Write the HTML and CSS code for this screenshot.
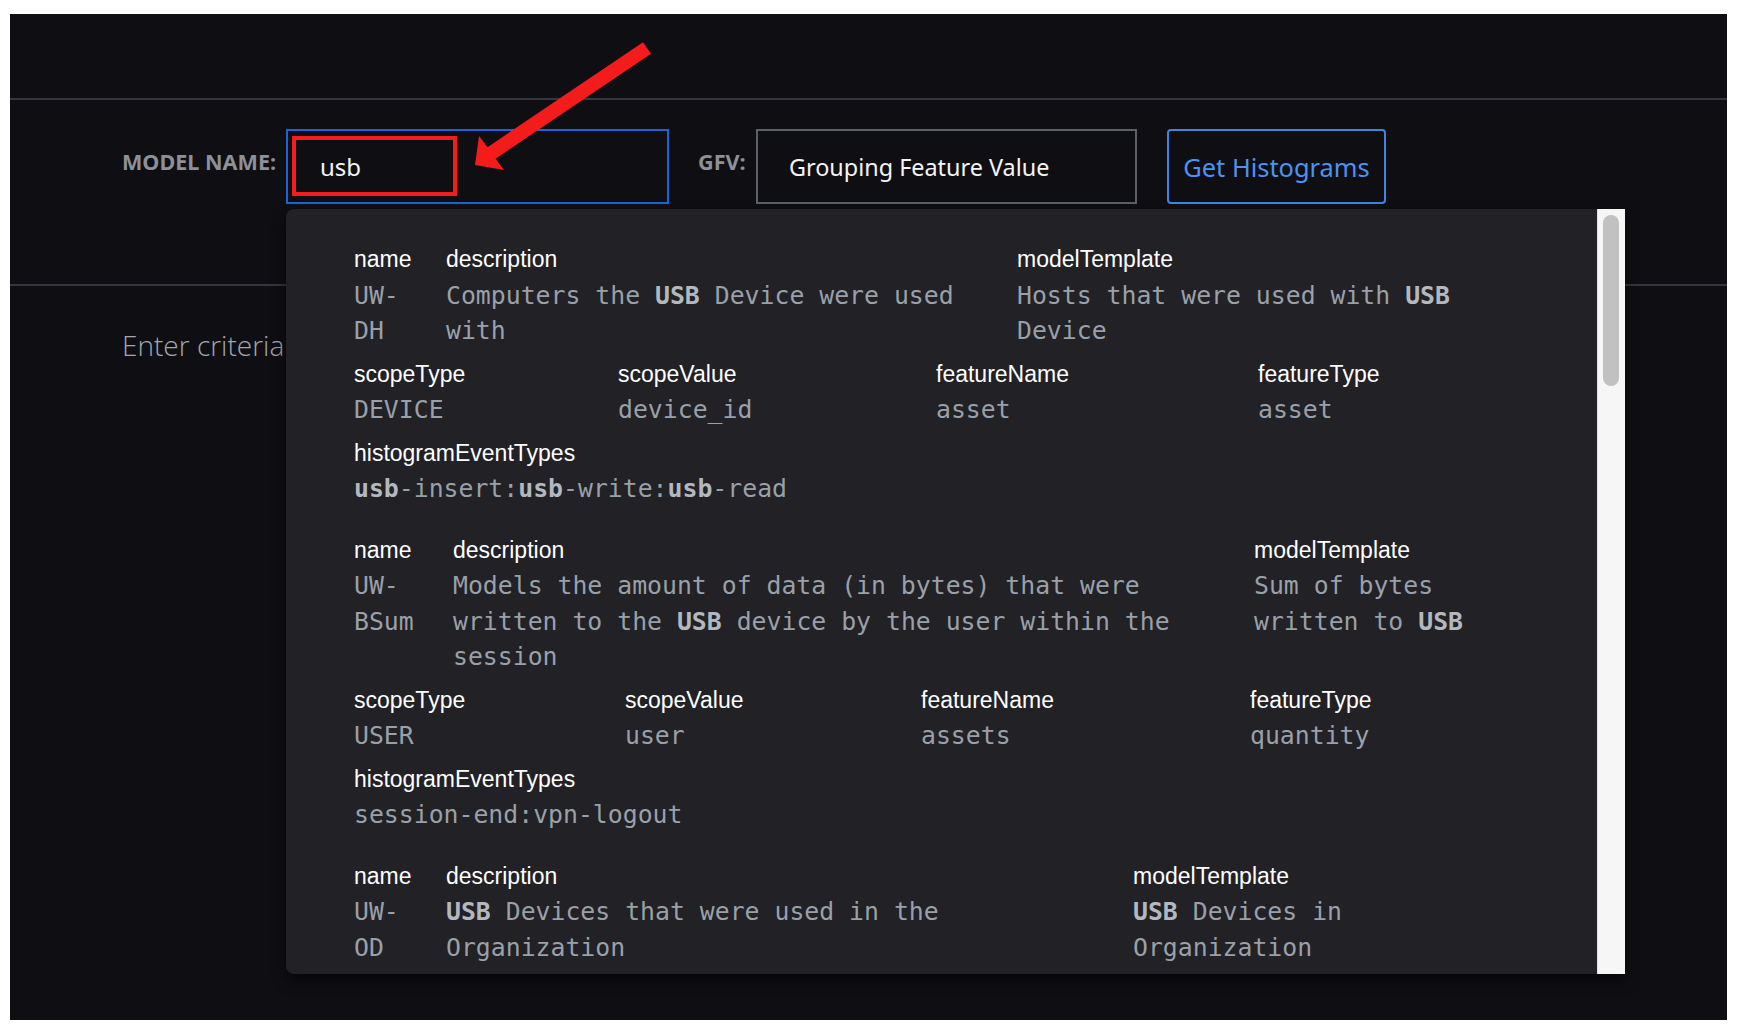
FILE: index.html
```html
<!DOCTYPE html>
<html lang="en">
<head>
<meta charset="utf-8">
<title>Histograms</title>
<link rel="stylesheet" href="styles.css">
</head>
<body>
<div class="screen">
  <header class="topbar"></header>
  <section class="search">
    <div class="form-row">
      <label class="field-label">MODEL NAME:</label>
      <div class="model-field">
        <div class="input input-active">usb</div>
        <div class="highlight"></div>
        <div class="dropdown">
          <div class="list">
            <div class="entry e1">
              <div class="row-top">
                <div class="cell"><div class="lbl">name</div><div class="val">UW-DH</div></div>
                <div class="cell"><div class="lbl">description</div><div class="val">Computers the <b>USB</b> Device were used with</div></div>
                <div class="cell"><div class="lbl">modelTemplate</div><div class="val">Hosts that were used with <b>USB</b> Device</div></div>
              </div>
              <div class="row-scope">
                <div class="cell"><div class="lbl">scopeType</div><div class="val">DEVICE</div></div>
                <div class="cell"><div class="lbl">scopeValue</div><div class="val">device_id</div></div>
                <div class="cell"><div class="lbl">featureName</div><div class="val">asset</div></div>
                <div class="cell"><div class="lbl">featureType</div><div class="val">asset</div></div>
              </div>
              <div class="row-hist">
                <div class="lbl">histogramEventTypes</div>
                <div class="val"><b>usb</b>-insert:<b>usb</b>-write:<b>usb</b>-read</div>
              </div>
            </div>
            <div class="entry e2">
              <div class="row-top">
                <div class="cell"><div class="lbl">name</div><div class="val">UW-BSum</div></div>
                <div class="cell"><div class="lbl">description</div><div class="val">Models the amount of data (in bytes) that were written to the <b>USB</b> device by the user within the session</div></div>
                <div class="cell"><div class="lbl">modelTemplate</div><div class="val">Sum of bytes written to <b>USB</b></div></div>
              </div>
              <div class="row-scope">
                <div class="cell"><div class="lbl">scopeType</div><div class="val">USER</div></div>
                <div class="cell"><div class="lbl">scopeValue</div><div class="val">user</div></div>
                <div class="cell"><div class="lbl">featureName</div><div class="val">assets</div></div>
                <div class="cell"><div class="lbl">featureType</div><div class="val">quantity</div></div>
              </div>
              <div class="row-hist">
                <div class="lbl">histogramEventTypes</div>
                <div class="val">session-end:vpn-logout</div>
              </div>
            </div>
            <div class="entry e3">
              <div class="row-top">
                <div class="cell"><div class="lbl">name</div><div class="val">UW-OD</div></div>
                <div class="cell"><div class="lbl">description</div><div class="val"><b>USB</b> Devices that were used in the Organization</div></div>
                <div class="cell"><div class="lbl">modelTemplate</div><div class="val"><b>USB</b> Devices in Organization</div></div>
              </div>
            </div>
          </div>
          <div class="track"><div class="thumb"></div></div>
        </div>
      </div>
      <label class="field-label gfv">GFV:</label>
      <div class="input input-gfv">Grouping Feature Value</div>
      <button class="btn" type="button">Get Histograms</button>
    </div>
  </section>
  <main class="content">
    <p class="hint">Enter criteria above to view histograms</p>
  </main>
  <svg class="arrow" viewBox="0 0 210 150" width="210" height="150" aria-hidden="true">
    <polygon points="15,135 19,106 27.5,117.2 183,12.2 191,23.8 35.5,128.8 44,140" fill="#f41b1b"/>
  </svg>
</div>
</body>
</html>
```

FILE: styles.css
```css
html, body {
  margin: 0;
  padding: 0;
  background: #ffffff;
}

.screen {
  position: relative;
  margin: 14px 17px 0 10px;
  height: 1006px;
  background: #0f0f13;
  display: flex;
  flex-direction: column;
  overflow: hidden;
}

.topbar {
  flex: none;
  height: 84px;
  border-bottom: 2px solid #35373c;
}

.search {
  flex: none;
  position: relative;
  z-index: 2;
  height: 184px;
  border-bottom: 2px solid #35373c;
}

.form-row {
  display: flex;
  align-items: center;
  padding: 29px 0 0 112px;
}

.field-label {
  flex: none;
  box-sizing: border-box;
  width: 164px;
  padding-bottom: 10px;
  font-family: "Noto Sans", "Open Sans", sans-serif;
  font-weight: 700;
  font-size: 21.6px;
  color: #8c9097;
  white-space: nowrap;
}

.field-label.gfv {
  width: 58px;
  margin-left: 29px;
}

.model-field {
  position: relative;
  flex: none;
}

.input {
  box-sizing: border-box;
  height: 75px;
  display: flex;
  align-items: center;
  padding-left: 31px;
  font-family: "Noto Sans", "Open Sans", sans-serif;
  font-size: 23.4px;
  color: #f4f4f4;
  background: #0f0f13;
}

.input-active {
  width: 383px;
  border: 2px solid #1b66d4;
  padding-left: 32px;
  font-size: 24px;
}

.input-gfv {
  flex: none;
  width: 381px;
  border: 2px solid #5d6066;
}

.btn {
  flex: none;
  box-sizing: border-box;
  margin-left: 30px;
  width: 219px;
  height: 75px;
  padding: 0;
  background: #0f0f13;
  border: 2px solid #3f86e0;
  border-radius: 4px;
  font-family: "Noto Sans", "Open Sans", sans-serif;
  font-size: 25.4px;
  color: #4b93f2;
}

.highlight {
  position: absolute;
  left: 6px;
  top: 7px;
  width: 165px;
  height: 60px;
  box-sizing: border-box;
  border: 4px solid #f41c1c;
}

.dropdown {
  position: absolute;
  left: 0;
  top: calc(100% + 5px);
  width: 1339px;
  height: 765px;
  display: flex;
  background: #212126;
  border-radius: 8px 0 0 8px;
  overflow: hidden;
  box-shadow: 0 6px 14px rgba(0, 0, 0, 0.6);
}

.list {
  flex: 1;
  min-width: 0;
  padding: 33px 68px 0 68px;
  overflow: hidden;
}

.entry {
  display: flex;
  flex-direction: column;
  gap: 8px;
  margin-bottom: 26px;
}

.row-top,
.row-scope {
  display: grid;
}

.e1 .row-top { grid-template-columns: 92px 571px 1fr; }
.e2 .row-top { grid-template-columns: 99px 801px 1fr; }
.e3 .row-top { grid-template-columns: 92px 687px 1fr; }
.e1 .row-scope { grid-template-columns: 264px 318px 322px 1fr; }
.e2 .row-scope { grid-template-columns: 271px 296px 329px 1fr; }

.cell {
  min-width: 0;
  padding-right: 24px;
}

.lbl {
  font-family: "Liberation Sans", Arial, sans-serif;
  font-size: 23px;
  line-height: 35.5px;
  color: #ffffff;
  white-space: nowrap;
}

.val {
  font-family: "DejaVu Sans Mono", "Liberation Mono", monospace;
  font-size: 24.8px;
  line-height: 35.5px;
  color: #9aa0a8;
}

.val b {
  font-weight: 700;
  color: #b3b8bf;
}

.track {
  flex: none;
  box-sizing: border-box;
  width: 28px;
  padding: 6px 0 0 5px;
  background: #f6f6f6;
  border-left: 1px solid #e0e0e0;
}

.thumb {
  width: 16px;
  height: 171px;
  border-radius: 8px;
  background: #c1c1c1;
}

.content {
  flex: 1;
  padding: 40px 0 0 112px;
}

.hint {
  margin: 0;
  font-family: "Open Sans", "Noto Sans", sans-serif;
  font-weight: 300;
  font-size: 28px;
  line-height: 38px;
  color: #a2a6ad;
  white-space: nowrap;
}

.arrow {
  position: absolute;
  left: 450px;
  top: 16px;
  z-index: 5;
}
```
